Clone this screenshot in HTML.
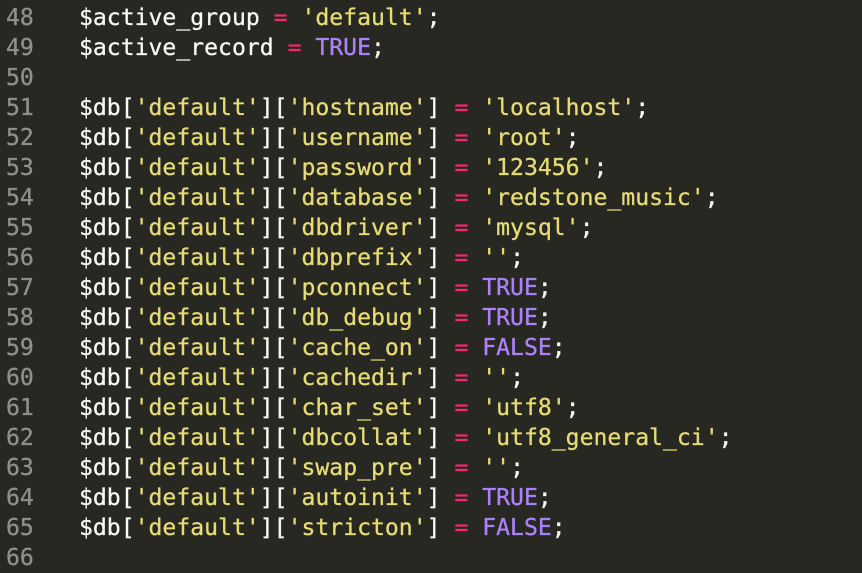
<!DOCTYPE html>
<html><head><style>
html,body{margin:0;padding:0;background:#272822;width:862px;height:552px;overflow:hidden}
.w{position:absolute;left:0;top:3px;font-family:"DejaVu Sans Mono","Liberation Mono",monospace;font-size:23.1px;line-height:30px;color:#f8f8f2;white-space:pre;-webkit-text-stroke:0.3px currentColor}
.n{color:#8f908a;display:inline-block;width:79px;padding-left:6px;box-sizing:border-box}
.s{color:#e6db74}.o{color:#f92672}.c{color:#ae81ff}
</style></head><body><div class="w"><div><span class="n">48</span>$active_group <span class="o">=</span> <span class="s">'default'</span>;</div><div><span class="n">49</span>$active_record <span class="o">=</span> <span class="c">TRUE</span>;</div><div><span class="n">50</span></div><div><span class="n">51</span>$db[<span class="s">'default'</span>][<span class="s">'hostname'</span>] <span class="o">=</span> <span class="s">'localhost'</span>;</div><div><span class="n">52</span>$db[<span class="s">'default'</span>][<span class="s">'username'</span>] <span class="o">=</span> <span class="s">'root'</span>;</div><div><span class="n">53</span>$db[<span class="s">'default'</span>][<span class="s">'password'</span>] <span class="o">=</span> <span class="s">'123456'</span>;</div><div><span class="n">54</span>$db[<span class="s">'default'</span>][<span class="s">'database'</span>] <span class="o">=</span> <span class="s">'redstone_music'</span>;</div><div><span class="n">55</span>$db[<span class="s">'default'</span>][<span class="s">'dbdriver'</span>] <span class="o">=</span> <span class="s">'mysql'</span>;</div><div><span class="n">56</span>$db[<span class="s">'default'</span>][<span class="s">'dbprefix'</span>] <span class="o">=</span> <span class="s">''</span>;</div><div><span class="n">57</span>$db[<span class="s">'default'</span>][<span class="s">'pconnect'</span>] <span class="o">=</span> <span class="c">TRUE</span>;</div><div><span class="n">58</span>$db[<span class="s">'default'</span>][<span class="s">'db_debug'</span>] <span class="o">=</span> <span class="c">TRUE</span>;</div><div><span class="n">59</span>$db[<span class="s">'default'</span>][<span class="s">'cache_on'</span>] <span class="o">=</span> <span class="c">FALSE</span>;</div><div><span class="n">60</span>$db[<span class="s">'default'</span>][<span class="s">'cachedir'</span>] <span class="o">=</span> <span class="s">''</span>;</div><div><span class="n">61</span>$db[<span class="s">'default'</span>][<span class="s">'char_set'</span>] <span class="o">=</span> <span class="s">'utf8'</span>;</div><div><span class="n">62</span>$db[<span class="s">'default'</span>][<span class="s">'dbcollat'</span>] <span class="o">=</span> <span class="s">'utf8_general_ci'</span>;</div><div><span class="n">63</span>$db[<span class="s">'default'</span>][<span class="s">'swap_pre'</span>] <span class="o">=</span> <span class="s">''</span>;</div><div><span class="n">64</span>$db[<span class="s">'default'</span>][<span class="s">'autoinit'</span>] <span class="o">=</span> <span class="c">TRUE</span>;</div><div><span class="n">65</span>$db[<span class="s">'default'</span>][<span class="s">'stricton'</span>] <span class="o">=</span> <span class="c">FALSE</span>;</div><div><span class="n">66</span></div></div></body></html>
